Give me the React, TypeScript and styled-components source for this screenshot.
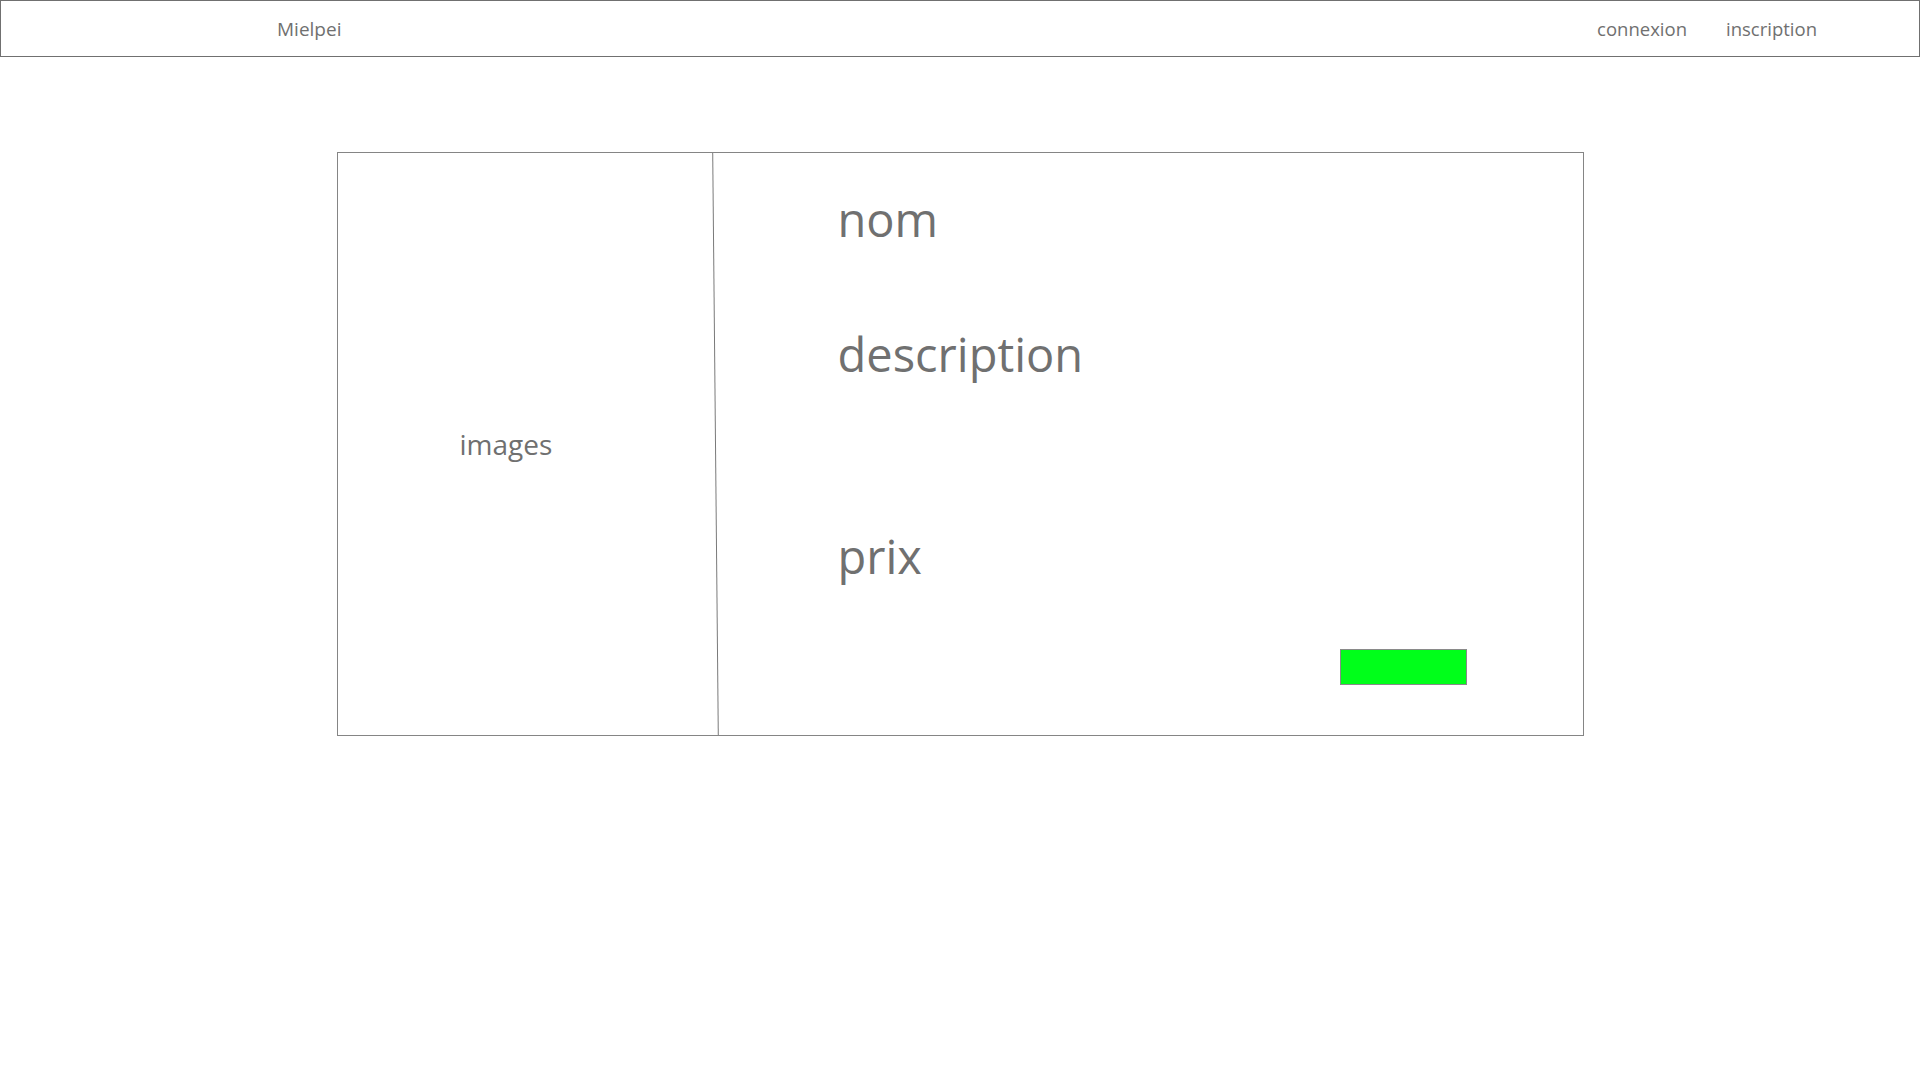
import React from 'react'
import styled, { createGlobalStyle } from 'styled-components'

const GlobalStyle = createGlobalStyle`
  html, body {
    margin: 0;
    padding: 0;
    background: #ffffff;
    font-family: 'Open Sans', 'Noto Sans', Arial, sans-serif;
    color: #707070;
  }
  * {
    box-sizing: border-box;
  }
`

const Header = styled.header`
  display: flex;
  align-items: center;
  justify-content: space-between;
  height: 57px;
  border: 1px solid #707070;
  padding: 0 102px 0 276px;
`

const Brand = styled.span`
  font-size: 19px;
  line-height: 1;
  color: #707070;
  margin-top: 2px;
`

const Nav = styled.nav`
  display: flex;
  align-items: center;
  gap: 39px;
  margin-top: 2px;
`

const NavLink = styled.a`
  font-size: 18.5px;
  line-height: 1;
  color: #707070;
  text-decoration: none;
  cursor: pointer;
`

const Card = styled.section`
  display: flex;
  width: 1247px;
  height: 584px;
  margin: 95px auto 0;
  border: 1px solid #858585;
`

const ImagePanel = styled.div`
  display: flex;
  align-items: center;
  width: 377px;
  padding-left: 122px;
`

const Divider = styled.div`
  width: 1px;
  background: #7a7a7a;
  transform: skewX(0.55deg);
`

const DetailPanel = styled.div`
  flex: 1;
  display: flex;
  flex-direction: column;
  padding: 43px 116px 0 122px;
`

const Caption = styled.span`
  font-size: 28px;
  line-height: 1;
  color: #707070;
`

const Field = styled.h2<{ $top: number }>`
  margin: ${(props) => props.$top}px 0 0;
  font-size: 47px;
  font-weight: 400;
  line-height: 1;
  color: #707070;
`

const BuyButton = styled.button`
  align-self: flex-end;
  width: 127px;
  height: 36px;
  margin-top: 69px;
  background: #00ff1a;
  border: 1px solid #8a8a8a;
  padding: 0;
  cursor: pointer;
`

export default function App() {
  return (
    <>
      <GlobalStyle />
      <Header>
        <Brand>Mielpei</Brand>
        <Nav>
          <NavLink>connexion</NavLink>
          <NavLink>inscription</NavLink>
        </Nav>
      </Header>
      <Card>
        <ImagePanel>
          <Caption>images</Caption>
        </ImagePanel>
        <Divider />
        <DetailPanel>
          <Field $top={0}>nom</Field>
          <Field $top={88}>description</Field>
          <Field $top={155}>prix</Field>
          <BuyButton aria-label="ajouter" />
        </DetailPanel>
      </Card>
    </>
  )
}
